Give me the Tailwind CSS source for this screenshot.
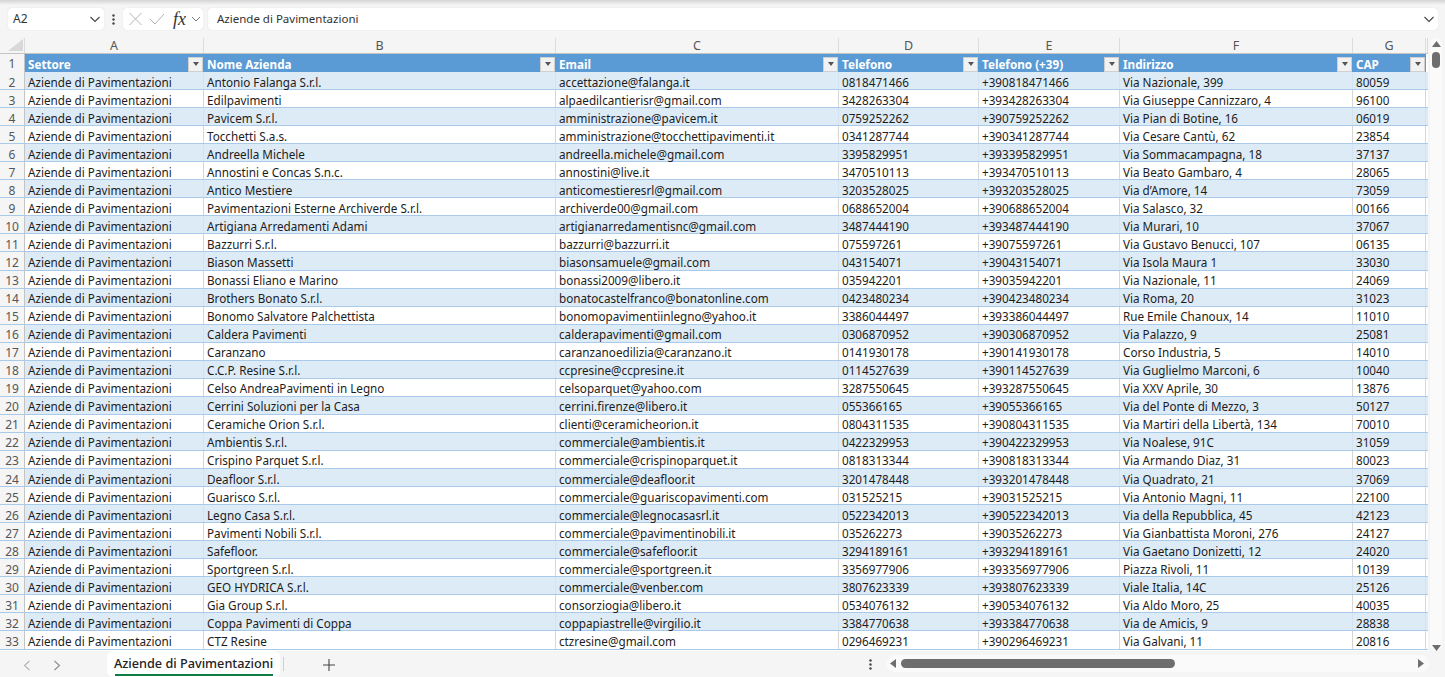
<!doctype html>
<html><head><meta charset="utf-8"><script src="https://cdn.jsdelivr.net/npm/@tailwindcss/browser@4"></script></head>
<body class="w-[1445px] h-[677px] overflow-hidden bg-[#f5f5f5] font-['Noto_Sans',sans-serif] text-[11.7px] text-[#1c1c1c]">
<div class="flex flex-col h-[677px]">
<!-- top shadow -->
<div class="h-[5px] bg-gradient-to-b from-[#d4d4d4] to-[#f5f5f5]"></div>
<!-- formula bar -->
<div class="h-[33px] flex items-start pt-[3px] pl-[8px] pr-[7px] text-[#333]">
  <div class="w-[96px] h-[22px] bg-white rounded-[4px] flex items-center justify-between pl-[5px] pr-[3px] text-[12px] shadow-[0_0_1px_#ccc]"><span>A2</span>
    <svg class="w-[12px] h-[12px]" viewBox="0 0 12 12" fill="none" stroke="#444" stroke-width="1.1"><path d="M1.5 4l4.5 4.5L10.5 4"/></svg></div>
  <div class="w-[19px] h-[22px] flex items-center justify-center"><svg class="w-[3px] h-[11px]" viewBox="0 0 3 11" fill="#444"><circle cx="1.5" cy="1.5" r="1.2"/><circle cx="1.5" cy="5.5" r="1.2"/><circle cx="1.5" cy="9.5" r="1.2"/></svg></div>
  <div class="w-[80px] h-[22px] bg-white rounded-[4px] flex items-center pl-[5px] shadow-[0_0_1px_#ccc]">
    <svg class="w-[15px] h-[14px]" viewBox="0 0 15 14" fill="none" stroke="#b5b5b5" stroke-width="1"><path d="M1.5 1l12 12M13.5 1l-12 12"/></svg>
    <svg class="w-[16px] h-[14px] ml-[6px]" viewBox="0 0 16 14" fill="none" stroke="#b5b5b5" stroke-width="1"><path d="M1 7l5 5L15 2"/></svg>
    <span class="ml-[8px] w-[16px] font-['Liberation_Serif'] italic text-[18px] leading-none text-[#333]">fx</span>
    <svg class="w-[10px] h-[10px] ml-[2px]" viewBox="0 0 10 10" fill="none" stroke="#777" stroke-width="1"><path d="M1 3l4 4 4-4"/></svg>
  </div>
  <div class="ml-[5px] flex-1 h-[22px] bg-white rounded-[4px] flex items-center justify-between pl-[9px] pr-[3px] text-[11.5px] shadow-[0_0_1px_#ccc]"><span>Aziende di Pavimentazioni</span>
    <svg class="w-[12px] h-[12px]" viewBox="0 0 12 12" fill="none" stroke="#444" stroke-width="1.1"><path d="M1.5 4l4.5 4.5L10.5 4"/></svg></div>
</div>
<!-- sheet area -->
<div class="flex flex-1 min-h-0 bg-[#f5f5f5]">
  <div class="w-[1428px] flex flex-col overflow-hidden bg-white">
    <!-- column letters -->
    <div class="h-[16px] shrink-0 flex bg-[#f5f5f5] text-[#555] text-[12.5px] leading-[15px] text-center border-b border-[#c4c4c4] [&>span]:border-r [&>span]:border-[#dcdcdc]">
      <span class="w-[25px] relative"><svg class="absolute left-[8px] top-[1px] w-[15px] h-[12px]" viewBox="0 0 15 12"><path d="M15 0V12H0Z" fill="#d8d8d8"/></svg></span>
      <span class="w-[179px]">A</span><span class="w-[352px]">B</span><span class="w-[283px]">C</span><span class="w-[140px]">D</span><span class="w-[141px]">E</span><span class="w-[233px]">F</span><span class="w-[73px]">G</span><span class="flex-1"></span>
    </div>
    <!-- header row -->
    <div class="h-[18px] shrink-0 grid grid-cols-[25px_179px_352px_283px_140px_141px_233px_73px] font-bold text-white leading-[20px] [&>div]:flex [&>div]:justify-between [&>div]:items-center [&>div]:pl-[3px] [&>div]:pr-[1px] [&>div]:bg-[#5b9bd5] [&_i]:w-[15px] [&_i]:h-[15px] [&_i]:bg-[#f2f2f2] [&_i]:border [&_i]:border-[#d0d0d0] [&_i]:flex [&_i]:items-center [&_i]:justify-center [&_b]:w-0 [&_b]:h-0 [&_b]:border-x-[3.5px] [&_b]:border-x-transparent [&_b]:border-t-[4px] [&_b]:border-t-[#555]">
      <span class="bg-[#f5f5f5] text-[#555] font-normal text-center text-[12px] border-r border-[#c4c4c4]">1</span>
      <div><span>Settore</span><i><b></b></i></div>
      <div><span>Nome Azienda</span><i><b></b></i></div>
      <div><span>Email</span><i><b></b></i></div>
      <div><span>Telefono</span><i><b></b></i></div>
      <div><span>Telefono (+39)</span><i><b></b></i></div>
      <div><span>Indirizzo</span><i><b></b></i></div>
      <div><span>CAP</span><i><b></b></i></div>
    </div>
    <!-- data rows -->
    <div class="[&>div]:grid [&>div]:grid-cols-[25px_179px_352px_283px_140px_141px_233px_73px] [&>div]:grid-rows-[17.06px] [&>div]:h-[18.06px] [&>div]:leading-[17px] [&>div]:border-b [&>div]:border-[#a9cbe9] [&>div:nth-child(odd)]:bg-[#ddebf7] [&>div>span]:pl-[3px] [&>div>span]:pt-[1.5px] [&>div>span]:border-r [&>div>span]:border-[#d6d6d6] [&>div:nth-child(odd)>span]:border-[#d3e3f1] [&>div>span]:whitespace-nowrap [&>div>span:first-child]:!pl-0 [&>div>span:first-child]:bg-[#f5f5f5] [&>div>span:first-child]:text-center [&>div>span:first-child]:text-[#555] [&>div>span:first-child]:text-[12px] [&>div>span:first-child]:!border-[#c4c4c4]">
<div><span>2</span><span>Aziende di Pavimentazioni</span><span>Antonio Falanga S.r.l.</span><span>accettazione@falanga.it</span><span>0818471466</span><span>+390818471466</span><span>Via Nazionale, 399</span><span>80059</span></div>
<div><span>3</span><span>Aziende di Pavimentazioni</span><span>Edilpavimenti</span><span>alpaedilcantierisr@gmail.com</span><span>3428263304</span><span>+393428263304</span><span>Via Giuseppe Cannizzaro, 4</span><span>96100</span></div>
<div><span>4</span><span>Aziende di Pavimentazioni</span><span>Pavicem S.r.l.</span><span>amministrazione@pavicem.it</span><span>0759252262</span><span>+390759252262</span><span>Via Pian di Botine, 16</span><span>06019</span></div>
<div><span>5</span><span>Aziende di Pavimentazioni</span><span>Tocchetti S.a.s.</span><span>amministrazione@tocchettipavimenti.it</span><span>0341287744</span><span>+390341287744</span><span>Via Cesare Cantù, 62</span><span>23854</span></div>
<div><span>6</span><span>Aziende di Pavimentazioni</span><span>Andreella Michele</span><span>andreella.michele@gmail.com</span><span>3395829951</span><span>+393395829951</span><span>Via Sommacampagna, 18</span><span>37137</span></div>
<div><span>7</span><span>Aziende di Pavimentazioni</span><span>Annostini e Concas S.n.c.</span><span>annostini@live.it</span><span>3470510113</span><span>+393470510113</span><span>Via Beato Gambaro, 4</span><span>28065</span></div>
<div><span>8</span><span>Aziende di Pavimentazioni</span><span>Antico Mestiere</span><span>anticomestieresrl@gmail.com</span><span>3203528025</span><span>+393203528025</span><span>Via d’Amore, 14</span><span>73059</span></div>
<div><span>9</span><span>Aziende di Pavimentazioni</span><span>Pavimentazioni Esterne Archiverde S.r.l.</span><span>archiverde00@gmail.com</span><span>0688652004</span><span>+390688652004</span><span>Via Salasco, 32</span><span>00166</span></div>
<div><span>10</span><span>Aziende di Pavimentazioni</span><span>Artigiana Arredamenti Adami</span><span>artigianarredamentisnc@gmail.com</span><span>3487444190</span><span>+393487444190</span><span>Via Murari, 10</span><span>37067</span></div>
<div><span>11</span><span>Aziende di Pavimentazioni</span><span>Bazzurri S.r.l.</span><span>bazzurri@bazzurri.it</span><span>075597261</span><span>+39075597261</span><span>Via Gustavo Benucci, 107</span><span>06135</span></div>
<div><span>12</span><span>Aziende di Pavimentazioni</span><span>Biason Massetti</span><span>biasonsamuele@gmail.com</span><span>043154071</span><span>+39043154071</span><span>Via Isola Maura 1</span><span>33030</span></div>
<div><span>13</span><span>Aziende di Pavimentazioni</span><span>Bonassi Eliano e Marino</span><span>bonassi2009@libero.it</span><span>035942201</span><span>+39035942201</span><span>Via Nazionale, 11</span><span>24069</span></div>
<div><span>14</span><span>Aziende di Pavimentazioni</span><span>Brothers Bonato S.r.l.</span><span>bonatocastelfranco@bonatonline.com</span><span>0423480234</span><span>+390423480234</span><span>Via Roma, 20</span><span>31023</span></div>
<div><span>15</span><span>Aziende di Pavimentazioni</span><span>Bonomo Salvatore Palchettista</span><span>bonomopavimentiinlegno@yahoo.it</span><span>3386044497</span><span>+393386044497</span><span>Rue Emile Chanoux, 14</span><span>11010</span></div>
<div><span>16</span><span>Aziende di Pavimentazioni</span><span>Caldera Pavimenti</span><span>calderapavimenti@gmail.com</span><span>0306870952</span><span>+390306870952</span><span>Via Palazzo, 9</span><span>25081</span></div>
<div><span>17</span><span>Aziende di Pavimentazioni</span><span>Caranzano</span><span>caranzanoedilizia@caranzano.it</span><span>0141930178</span><span>+390141930178</span><span>Corso Industria, 5</span><span>14010</span></div>
<div><span>18</span><span>Aziende di Pavimentazioni</span><span>C.C.P. Resine S.r.l.</span><span>ccpresine@ccpresine.it</span><span>0114527639</span><span>+390114527639</span><span>Via Guglielmo Marconi, 6</span><span>10040</span></div>
<div><span>19</span><span>Aziende di Pavimentazioni</span><span>Celso AndreaPavimenti in Legno</span><span>celsoparquet@yahoo.com</span><span>3287550645</span><span>+393287550645</span><span>Via XXV Aprile, 30</span><span>13876</span></div>
<div><span>20</span><span>Aziende di Pavimentazioni</span><span>Cerrini Soluzioni per la Casa</span><span>cerrini.firenze@libero.it</span><span>055366165</span><span>+39055366165</span><span>Via del Ponte di Mezzo, 3</span><span>50127</span></div>
<div><span>21</span><span>Aziende di Pavimentazioni</span><span>Ceramiche Orion S.r.l.</span><span>clienti@ceramicheorion.it</span><span>0804311535</span><span>+390804311535</span><span>Via Martiri della Libertà, 134</span><span>70010</span></div>
<div><span>22</span><span>Aziende di Pavimentazioni</span><span>Ambientis S.r.l.</span><span>commerciale@ambientis.it</span><span>0422329953</span><span>+390422329953</span><span>Via Noalese, 91C</span><span>31059</span></div>
<div><span>23</span><span>Aziende di Pavimentazioni</span><span>Crispino Parquet S.r.l.</span><span>commerciale@crispinoparquet.it</span><span>0818313344</span><span>+390818313344</span><span>Via Armando Diaz, 31</span><span>80023</span></div>
<div><span>24</span><span>Aziende di Pavimentazioni</span><span>Deafloor S.r.l.</span><span>commerciale@deafloor.it</span><span>3201478448</span><span>+393201478448</span><span>Via Quadrato, 21</span><span>37069</span></div>
<div><span>25</span><span>Aziende di Pavimentazioni</span><span>Guarisco S.r.l.</span><span>commerciale@guariscopavimenti.com</span><span>031525215</span><span>+39031525215</span><span>Via Antonio Magni, 11</span><span>22100</span></div>
<div><span>26</span><span>Aziende di Pavimentazioni</span><span>Legno Casa S.r.l.</span><span>commerciale@legnocasasrl.it</span><span>0522342013</span><span>+390522342013</span><span>Via della Repubblica, 45</span><span>42123</span></div>
<div><span>27</span><span>Aziende di Pavimentazioni</span><span>Pavimenti Nobili S.r.l.</span><span>commerciale@pavimentinobili.it</span><span>035262273</span><span>+39035262273</span><span>Via Gianbattista Moroni, 276</span><span>24127</span></div>
<div><span>28</span><span>Aziende di Pavimentazioni</span><span>Safefloor.</span><span>commerciale@safefloor.it</span><span>3294189161</span><span>+393294189161</span><span>Via Gaetano Donizetti, 12</span><span>24020</span></div>
<div><span>29</span><span>Aziende di Pavimentazioni</span><span>Sportgreen S.r.l.</span><span>commerciale@sportgreen.it</span><span>3356977906</span><span>+393356977906</span><span>Piazza Rivoli, 11</span><span>10139</span></div>
<div><span>30</span><span>Aziende di Pavimentazioni</span><span>GEO HYDRICA S.r.l.</span><span>commerciale@venber.com</span><span>3807623339</span><span>+393807623339</span><span>Viale Italia, 14C</span><span>25126</span></div>
<div><span>31</span><span>Aziende di Pavimentazioni</span><span>Gia Group S.r.l.</span><span>consorziogia@libero.it</span><span>0534076132</span><span>+390534076132</span><span>Via Aldo Moro, 25</span><span>40035</span></div>
<div><span>32</span><span>Aziende di Pavimentazioni</span><span>Coppa Pavimenti di Coppa</span><span>coppapiastrelle@virgilio.it</span><span>3384770638</span><span>+393384770638</span><span>Via de Amicis, 9</span><span>28838</span></div>
<div><span>33</span><span>Aziende di Pavimentazioni</span><span>CTZ Resine</span><span>ctzresine@gmail.com</span><span>0296469231</span><span>+390296469231</span><span>Via Galvani, 11</span><span>20816</span></div>
    </div>
  </div>
  <!-- vertical scrollbar -->
  <div class="w-[17px] bg-[#f5f5f5] flex flex-col items-center pl-[1px] pr-[2px]">
    <div class="w-[12px] flex-1 bg-[#fafafa] rounded-full flex flex-col items-center pt-[3px]">
      <svg class="w-[9px] h-[6px] shrink-0" viewBox="0 0 9 6" fill="#6e6e6e"><path d="M4.5 0L9 6H0Z"/></svg>
      <div class="w-[8px] h-[16px] mt-[5px] rounded-full bg-[#6e6e6e]"></div>
      <svg class="w-[9px] h-[6px] mt-auto shrink-0" viewBox="0 0 9 6" fill="#6e6e6e"><path d="M0 0H9L4.5 6Z"/></svg>
    </div>
  </div>
</div>
<!-- tab bar -->
<div class="h-[26px] shrink-0 flex items-start bg-[#f5f5f5]">
  <svg class="ml-[23px] mt-[9px] w-[8px] h-[11px]" viewBox="0 0 8 11" fill="none" stroke="#b4b4b4" stroke-width="1.1"><path d="M6.5 1L1.5 5.5l5 4.5"/></svg>
  <svg class="ml-[22px] mt-[9px] w-[8px] h-[11px]" viewBox="0 0 8 11" fill="none" stroke="#8c8c8c" stroke-width="1.1"><path d="M1.5 1l5 4.5-5 4.5"/></svg>
  <div class="ml-[46px] w-[173px] h-[26px] bg-white rounded-[6px] flex flex-col items-center pt-[3px]">
    <span class="text-[12.7px] font-medium text-[#222] leading-[19px]">Aziende di Pavimentazioni</span>
    <div class="w-[158px] h-[2px] bg-[#107c41] mt-[1px]"></div>
  </div>
  <div class="ml-[3px] mt-[6px] w-px h-[14px] bg-[#cfcfcf]"></div>
  <svg class="ml-[39px] mt-[8px] w-[12px] h-[12px]" viewBox="0 0 12 12" stroke="#444" stroke-width="1.1"><path d="M6 0v12M0 6h12"/></svg>
  <svg class="ml-[534px] mt-[8px] w-[3px] h-[11px]" viewBox="0 0 3 11" fill="#444"><circle cx="1.5" cy="1.5" r="1.2"/><circle cx="1.5" cy="5.5" r="1.2"/><circle cx="1.5" cy="9.5" r="1.2"/></svg>
  <div class="ml-[14px] mt-[4px] w-[543px] h-[17px] rounded-full bg-[#fafafa] flex items-center pl-[4px] pr-[5px]">
    <svg class="w-[6px] h-[9px]" viewBox="0 0 6 9" fill="#6e6e6e"><path d="M6 0V9L0 4.5Z"/></svg>
    <div class="ml-[5px] w-[274px] h-[9px] rounded-full bg-[#6e6e6e]"></div>
    <svg class="ml-auto w-[6px] h-[9px]" viewBox="0 0 6 9" fill="#6e6e6e"><path d="M0 0V9L6 4.5Z"/></svg>
  </div>
</div>
</div>
</body></html>
